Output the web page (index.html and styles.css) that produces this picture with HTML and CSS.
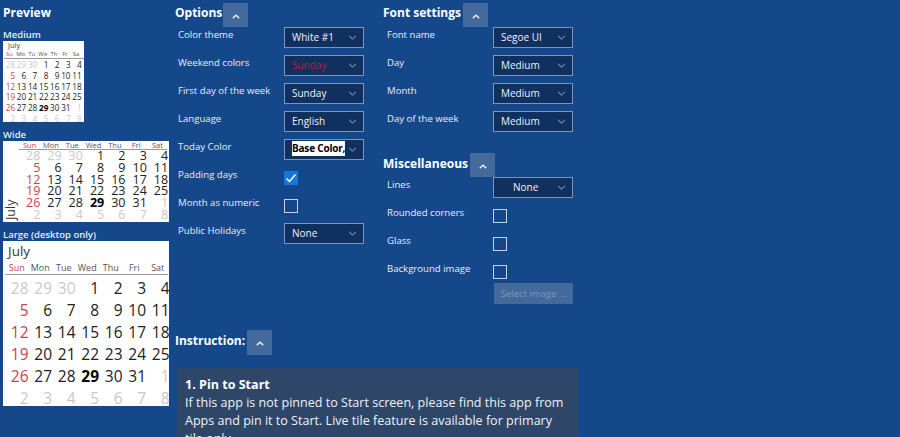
FILE: index.html
```html
<!DOCTYPE html>
<html lang="en">
<head>
    <meta charset="UTF-8">
    <meta name="viewport" content="width=device-width, initial-scale=1.0">
    <title>Calendar Live Tile Settings</title>
    <link rel="stylesheet" href="styles.css">
</head>
<body>
    <svg class="icon-defs" width="0" height="0" aria-hidden="true">
        <symbol id="chev-up" viewBox="0 0 10 6"><path d="M1 5 L5 1.5 L9 5" fill="none" stroke="currentColor" stroke-width="1.8"/></symbol>
        <symbol id="chev-down" viewBox="0 0 10 6"><path d="M1 1 L5 5 L9 1" fill="none" stroke="currentColor" stroke-width="1.1"/></symbol>
    </svg>

    <div class="preview">
        <h2>Preview</h2>

        <h3 class="label-medium">Medium</h3>
        <div class="cal cal-medium">
            <div class="cal-month">July</div>
            <div class="cal-head"><span class="sun">Su</span><span>Mo</span><span>Tu</span><span>We</span><span>Th</span><span>Fr</span><span>Sa</span></div>
            <div class="cal-days">
                <span class="off">28</span><span class="off">29</span><span class="off">30</span><span>1</span><span>2</span><span>3</span><span>4</span>
                <span class="sun">5</span><span>6</span><span>7</span><span>8</span><span>9</span><span>10</span><span>11</span>
                <span class="sun">12</span><span>13</span><span>14</span><span>15</span><span>16</span><span>17</span><span>18</span>
                <span class="sun">19</span><span>20</span><span>21</span><span>22</span><span>23</span><span>24</span><span>25</span>
                <span class="sun">26</span><span>27</span><span>28</span><span class="today">29</span><span>30</span><span>31</span><span class="off">1</span>
                <span class="off">2</span><span class="off">3</span><span class="off">4</span><span class="off">5</span><span class="off">6</span><span class="off">7</span><span class="off">8</span>
            </div>
        </div>

        <h3 class="label-wide">Wide</h3>
        <div class="cal cal-wide">
            <div class="cal-month">July</div>
            <div class="cal-body">
                <div class="cal-head"><span class="sun">Sun</span><span>Mon</span><span>Tue</span><span>Wed</span><span>Thu</span><span>Fri</span><span>Sat</span></div>
                <div class="cal-days">
                    <span class="off">28</span><span class="off">29</span><span class="off">30</span><span>1</span><span>2</span><span>3</span><span>4</span>
                    <span class="sun">5</span><span>6</span><span>7</span><span>8</span><span>9</span><span>10</span><span>11</span>
                    <span class="sun">12</span><span>13</span><span>14</span><span>15</span><span>16</span><span>17</span><span>18</span>
                    <span class="sun">19</span><span>20</span><span>21</span><span>22</span><span>23</span><span>24</span><span>25</span>
                    <span class="sun">26</span><span>27</span><span>28</span><span class="today">29</span><span>30</span><span>31</span><span class="off">1</span>
                    <span class="off">2</span><span class="off">3</span><span class="off">4</span><span class="off">5</span><span class="off">6</span><span class="off">7</span><span class="off">8</span>
                </div>
            </div>
        </div>

        <h3 class="label-large">Large (desktop only)</h3>
        <div class="cal cal-large">
            <div class="cal-month">July</div>
            <div class="cal-head"><span class="sun">Sun</span><span>Mon</span><span>Tue</span><span>Wed</span><span>Thu</span><span>Fri</span><span>Sat</span></div>
            <div class="cal-days">
                <span class="off">28</span><span class="off">29</span><span class="off">30</span><span>1</span><span>2</span><span>3</span><span>4</span>
                <span class="sun">5</span><span>6</span><span>7</span><span>8</span><span>9</span><span>10</span><span>11</span>
                <span class="sun">12</span><span>13</span><span>14</span><span>15</span><span>16</span><span>17</span><span>18</span>
                <span class="sun">19</span><span>20</span><span>21</span><span>22</span><span>23</span><span>24</span><span>25</span>
                <span class="sun">26</span><span>27</span><span>28</span><span class="today">29</span><span>30</span><span>31</span><span class="off">1</span>
                <span class="off">2</span><span class="off">3</span><span class="off">4</span><span class="off">5</span><span class="off">6</span><span class="off">7</span><span class="off">8</span>
            </div>
        </div>
    </div>

    <div class="settings">
        <div class="columns">
            <div class="options">
                <div class="section-head options-head">
                    <h2>Options</h2>
                    <button class="collapse"><svg><use href="#chev-up"/></svg></button>
                </div>
                <div class="row"><label>Color theme</label><div class="select">White #1<svg><use href="#chev-down"/></svg></div></div>
                <div class="row"><label>Weekend colors</label><div class="select select-red">Sunday<svg><use href="#chev-down"/></svg></div></div>
                <div class="row"><label>First day of the week</label><div class="select">Sunday<svg><use href="#chev-down"/></svg></div></div>
                <div class="row"><label>Language</label><div class="select">English<svg><use href="#chev-down"/></svg></div></div>
                <div class="row"><label>Today Color</label><div class="select"><span class="picked">Base Color,</span><svg><use href="#chev-down"/></svg></div></div>
                <div class="row"><label>Padding days</label><div class="check checked"><svg viewBox="0 0 14 14"><path d="M2.5 7.5 L5.5 10.5 L11.5 3.5" fill="none" stroke="#fff" stroke-width="1.5"/></svg></div></div>
                <div class="row"><label>Month as numeric</label><div class="check"></div></div>
                <div class="row"><label>Public Holidays</label><div class="select">None<svg><use href="#chev-down"/></svg></div></div>
            </div>

            <div class="fonts">
                <div class="section-head">
                    <h2>Font settings</h2>
                    <button class="collapse"><svg><use href="#chev-up"/></svg></button>
                </div>
                <div class="row"><label>Font name</label><div class="select">Segoe UI<svg><use href="#chev-down"/></svg></div></div>
                <div class="row"><label>Day</label><div class="select">Medium<svg><use href="#chev-down"/></svg></div></div>
                <div class="row"><label>Month</label><div class="select">Medium<svg><use href="#chev-down"/></svg></div></div>
                <div class="row"><label>Day of the week</label><div class="select">Medium<svg><use href="#chev-down"/></svg></div></div>

                <div class="section-head misc-head">
                    <h2>Miscellaneous</h2>
                    <button class="collapse"><svg><use href="#chev-up"/></svg></button>
                </div>
                <div class="row"><label>Lines</label><div class="select select-center">None<svg><use href="#chev-down"/></svg></div></div>
                <div class="row"><label>Rounded corners</label><div class="check"></div></div>
                <div class="row"><label>Glass</label><div class="check"></div></div>
                <div class="row row-short"><label>Background image</label><div class="check"></div></div>
                <div class="row-button"><button class="select-image">Select image ...</button></div>
            </div>
        </div>

        <div class="section-head instruction-head">
            <h2>Instruction:</h2>
            <button class="collapse"><svg><use href="#chev-up"/></svg></button>
        </div>
        <div class="instruction">
            <strong>1. Pin to Start</strong>
            <p>If this app is not pinned to Start screen, please find this app from Apps and pin it to Start. Live tile feature is available for primary tile only.</p>
        </div>
    </div>
</body>
</html>
```

FILE: styles.css
```css
body {
    display: flex;
    margin: 0;
    height: 437px;
    overflow: hidden;
    background-color: #14488a;
    color: #f2f6fb;
    font-family: "Open Sans", "Noto Sans", sans-serif;
}
.icon-defs {
    position: absolute;
}
h2 {
    margin: 0;
    font-size: 12px;
    line-height: 20px;
    font-weight: 700;
    color: #fff;
}
h3 {
    margin: 0;
    font-size: 9.5px;
    line-height: 13px;
    font-weight: 600;
    color: #e4eefa;
}

/* preview column */
.preview {
    width: 175px;
    flex: none;
    padding: 0 0 0 3px;
    box-sizing: border-box;
}
.preview h2 {
    line-height: 25px;
}
.label-medium {
    margin-top: 3px;
}
.label-wide {
    margin-top: 6px;
}
.label-large {
    margin-top: 6px;
}
.cal {
    background-color: #fff;
    color: #222;
    box-sizing: border-box;
}
.cal .sun {
    color: #c8434c;
}
.cal .off {
    color: #c9c9c9;
}
.cal .today {
    font-weight: 700;
    color: #000;
}
.cal-head {
    display: grid;
    text-align: center;
    color: #555;
    border-bottom: 1px solid #999;
}
.cal-days {
    display: grid;
    text-align: right;
}

.cal-medium {
    width: 81px;
    height: 81px;
    padding-left: 1px;
}
.cal-medium .cal-month {
    padding-left: 4px;
    font-size: 7.5px;
    line-height: 9px;
    color: #444;
}
.cal-medium .cal-head {
    grid-template-columns: repeat(7, 11.1px);
    font-size: 6px;
    line-height: 8px;
    height: 9px;
    box-sizing: border-box;
}
.cal-medium .cal-days {
    margin-top: 1px;
    grid-template-columns: repeat(7, 11.1px);
    grid-auto-rows: 10.8px;
    font-size: 8.2px;
    line-height: 10.8px;
}

.cal-wide {
    display: flex;
    width: 166px;
    height: 81px;
}
.cal-wide .cal-month {
    width: 16px;
    flex: none;
    writing-mode: vertical-rl;
    transform: rotate(180deg);
    font-size: 12.5px;
    line-height: 16px;
    padding-top: 2px;
    box-sizing: border-box;
    color: #333;
}
.cal-wide .cal-body {
    width: 148px;
}
.cal-wide .cal-head {
    grid-template-columns: repeat(7, 21.3px);
    font-size: 7.5px;
    line-height: 8px;
    height: 9px;
    box-sizing: border-box;
}
.cal-wide .cal-days {
    grid-template-columns: repeat(7, 21.3px);
    grid-auto-rows: 11.8px;
    font-size: 12.5px;
    line-height: 11.8px;
}

.cal-large {
    width: 166px;
    height: 165px;
    padding: 0 1px 0 2px;
}
.cal-large .cal-month {
    padding-left: 3px;
    font-size: 13.5px;
    line-height: 20px;
    color: #333;
}
.cal-large .cal-head {
    margin-bottom: 2px;
    grid-template-columns: repeat(7, 23.5px);
    font-size: 9px;
    line-height: 14px;
    height: 14px;
    box-sizing: border-box;
}
.cal-large .cal-days {
    grid-template-columns: repeat(7, 23.5px);
    grid-auto-rows: 22px;
    font-size: 15.5px;
    line-height: 22px;
}

/* settings */
.settings {
    width: 410px;
    flex: none;
}
.columns {
    display: flex;
    height: 330px;
    padding-top: 3px;
    box-sizing: border-box;
}
.options {
    width: 208px;
    flex: none;
}
.fonts {
    width: 200px;
    flex: none;
}
.section-head {
    display: flex;
    height: 24px;
    gap: 2px;
}
.options-head {
    gap: 1px;
}
.collapse {
    width: 25px;
    height: 24px;
    padding: 0;
    border: none;
    background-color: #44699d;
    color: #e8eef7;
    display: flex;
    align-items: center;
    justify-content: center;
}
.collapse svg {
    width: 8px;
    height: 5px;
    margin-top: 2px;
}
.row {
    display: flex;
    height: 28px;
    padding-left: 3px;
}
.fonts .row {
    padding-left: 4px;
}
.row label {
    width: 106px;
    flex: none;
    font-size: 9.6px;
    line-height: 15px;
    color: #e6eef8;
}
.select {
    position: relative;
    width: 80px;
    height: 21px;
    padding-left: 7px;
    box-sizing: border-box;
    border: 1.5px solid #7896bd;
    background-color: #10305f;
    font-size: 10px;
    line-height: 18px;
    color: #eef3fa;
    white-space: nowrap;
}
.select svg {
    position: absolute;
    top: 7px;
    right: 6px;
    width: 9px;
    height: 5px;
    color: #b5c5da;
}
.select-red {
    color: #b01f33;
}
.select-center {
    padding-left: 19px;
}
.picked {
    display: inline-block;
    background-color: #fff;
    color: #000;
    font-weight: 700;
    line-height: 15px;
    vertical-align: 1px;
    letter-spacing: -0.2px;
}
.check {
    width: 14px;
    height: 14px;
    margin-top: 4px;
    box-sizing: border-box;
    border: 1.5px solid #c3d2e6;
}
.check.checked {
    border: none;
    background-color: #1577d8;
}
.check svg {
    display: block;
    width: 14px;
    height: 14px;
}
.misc-head {
    margin-top: 14px;
}
.misc-head h2 {
    line-height: 22px;
}
.row-short {
    height: 22px;
}
.row-button {
    padding-left: 111px;
}
.select-image {
    display: block;
    width: 79px;
    height: 21px;
    padding: 0;
    border: none;
    background-color: #44699d;
    color: #7d97bb;
    font-family: inherit;
    font-size: 9.5px;
}
.instruction-head {
    height: 25px;
}
.instruction-head h2 {
    line-height: 22px;
}
.instruction-head .collapse {
    height: 25px;
}
.instruction {
    width: 401px;
    height: 69px;
    margin: 13px 0 0 2px;
    padding: 8px 8px 0;
    box-sizing: border-box;
    overflow: hidden;
    background-color: #2e4668;
    font-size: 12.55px;
    line-height: 18px;
    color: #f0f3f8;
}
.instruction strong {
    display: block;
    color: #fff;
}
.instruction p {
    margin: 0;
}
```
